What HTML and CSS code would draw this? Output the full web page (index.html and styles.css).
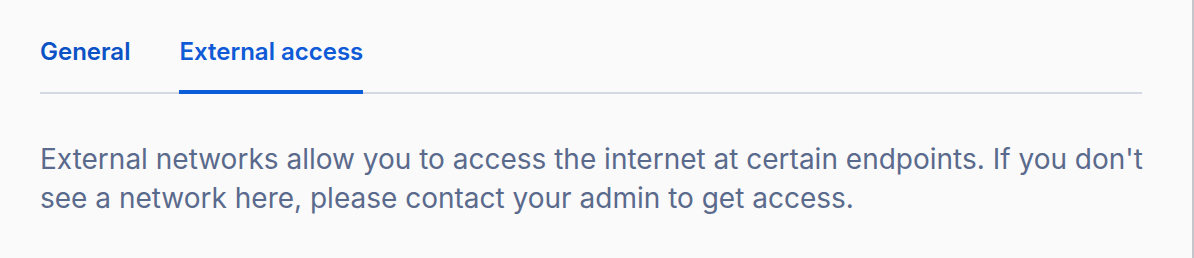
FILE: index.html
```html
<!DOCTYPE html>
<html lang="en">
<head>
  <meta charset="UTF-8" />
  <title>Network settings</title>
  <link rel="stylesheet" href="styles.css">
</head>
<body>
  <div class="panel">
    <div class="tabs">
      <div class="tab">General</div>
      <div class="tab active">External access</div>
    </div>
    <p class="description">
      External networks allow you to access the internet at certain endpoints. If you don't<br>
      see a network here, please contact your admin to get access.
    </p>
  </div>
</body>
</html>
```

FILE: styles.css
```css
* {
  box-sizing: border-box;
  margin: 0;
  padding: 0;
}

body {
  background-color: #fafafb;
  font-family: Inter, 'Noto Sans', sans-serif;
  height: 258px;
  overflow: hidden;
}

/* Panel con borde derecho */
.panel {
  height: 100%;
  padding: 36px 50px 0 40px;
  border-right: 2px solid #c4c6cc;
}

/* Pestañas */
.tabs {
  display: flex;
  gap: 49px;
  border-bottom: 2px solid #d3d8e3;
}

.tab {
  font-size: 24px;
  font-weight: 600;
  color: #0b52c4;
  padding-bottom: 22px;
  margin-bottom: -2px;
  border-bottom: 4px solid transparent;
  line-height: 32px;
}

.tab.active {
  color: #0f5ad6;
  border-bottom-color: #0b5cd8;
}

/* Texto descriptivo */
.description {
  margin-top: 46px;
  font-size: 28px;
  line-height: 39px;
  color: #5a6a8c;
  white-space: nowrap;
}
```
